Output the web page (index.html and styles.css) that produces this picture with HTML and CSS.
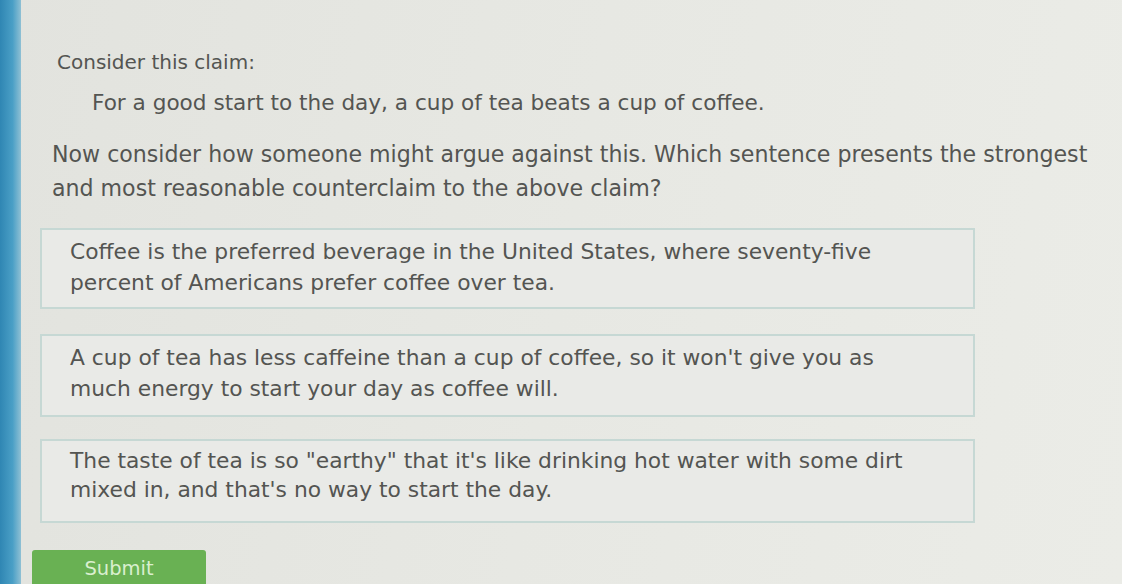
FILE: index.html
```html
<!DOCTYPE html>
<html>
<head>
<meta charset="utf-8">
<link rel="stylesheet" href="styles.css">
</head>
<body>
<div class="page">
  <div class="edge"></div>
  <main class="content">
    <p class="lead">Consider this claim:</p>
    <p class="claim">For a good start to the day, a cup of tea beats a cup of coffee.</p>
    <p class="question">Now consider how someone might argue against this. Which sentence presents the strongest<br>and most reasonable counterclaim to the above claim?</p>
    <div class="options">
      <div class="option">Coffee is the preferred beverage in the United States, where seventy-five<br>percent of Americans prefer coffee over tea.</div>
      <div class="option">A cup of tea has less caffeine than a cup of coffee, so it won't give you as<br>much energy to start your day as coffee will.</div>
      <div class="option">The taste of tea is so "earthy" that it's like drinking hot water with some dirt<br>mixed in, and that's no way to start the day.</div>
    </div>
    <button class="submit">Submit</button>
  </main>
</div>
</body>
</html>
```

FILE: styles.css
```css
html, body {
  margin: 0;
  padding: 0;
  height: 100%;
  overflow: hidden;
}
body {
  background: #e5e6e1;
  font-family: "DejaVu Sans", Verdana, sans-serif;
  color: #545552;
}
.page {
  display: flex;
  height: 584px;
  background: linear-gradient(100deg, #e2e3de 0%, #e7e8e3 50%, #ebece7 100%);
}
.edge {
  width: 21px;
  flex: none;
  background: linear-gradient(90deg, #2f86b3 0%, #4a9fc6 60%, #8fc0d4 100%);
}
.content {
  flex: 1;
  padding: 48px 0 0 11px;
}
.lead {
  margin: 0 0 0 25px;
  font-size: 20px;
  line-height: 28px;
}
.claim {
  margin: 13px 0 0 60px;
  font-size: 21.6px;
  line-height: 28px;
}
.question {
  margin: 20px 0 0 20px;
  white-space: nowrap;
  font-size: 22.1px;
  line-height: 34px;
}
.options {
  margin: 23px 0 0 8px;
  width: 935px;
  display: flex;
  flex-direction: column;
}
.option {
  background: #e9eae7;
  border: 2px solid #c6d8d4;
  padding: 6px 20px 9px 28px;
  font-size: 21.8px;
  line-height: 31px;
  white-space: nowrap;
}
.option:nth-child(2) {
  margin-top: 25px;
  padding-bottom: 11px;
}
.option:nth-child(3) {
  margin-top: 22px;
  padding-top: 5px;
  padding-bottom: 17px;
  line-height: 29px;
}
.submit {
  display: block;
  margin: 27px 0 0 0;
  width: 174px;
  height: 40px;
  border: none;
  border-radius: 3px 3px 0 0;
  background: #69b153;
  color: #d9efcf;
  font-family: "DejaVu Sans", Verdana, sans-serif;
  font-size: 19.5px;
  padding: 0 0 4px 0;
}
```
